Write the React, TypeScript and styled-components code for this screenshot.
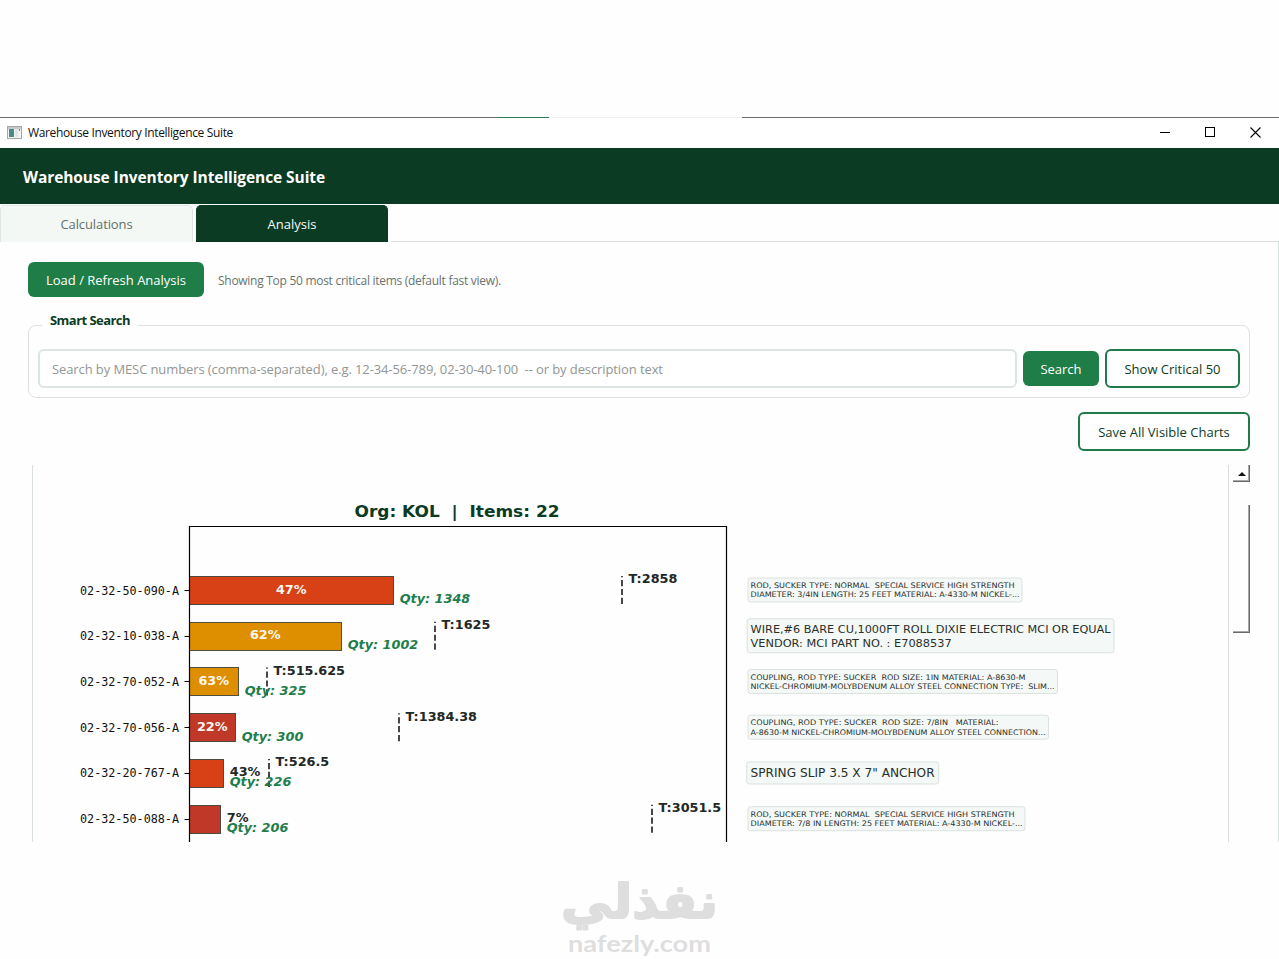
import React from "react";
import styled, { createGlobalStyle } from "styled-components";

const GlobalStyle = createGlobalStyle`
  * { box-sizing: border-box; }
  body { margin: 0; background: #fff; overflow: hidden; font-family: "Open Sans", "Noto Sans", sans-serif; }
`;

const Page = styled.main`
  width: 1279px;
  height: 959px;
  padding-top: 117px;
  background: #fefefe;
  display: flex;
  flex-direction: column;
`;

const TopEdge = styled.div`
  height: 1px;
  flex: none;
  background: linear-gradient(to right, #6a6f6c 0 498px, #2d7b55 498px 549px, #f1f1f1 549px 742px, #6a6f6c 742px);
`;

const AppWindow = styled.section`
  height: 724px;
  display: flex;
  flex-direction: column;
  overflow: hidden;
`;

const TitleBar = styled.div`
  height: 30px;
  flex: none;
  display: flex;
  align-items: center;
  padding: 0 18px 2px 7px;
  gap: 6px;
  background: #fff;
`;

const TitleText = styled.span`
  flex: 1;
  font-size: 12px;
  letter-spacing: -0.35px;
  color: #111;
`;

const WindowButtons = styled.div`
  display: flex;
  gap: 34px;
  svg { display: block; }
`;

const Header = styled.header`
  height: 56px;
  flex: none;
  padding: 2px 23px 0;
  display: flex;
  align-items: center;
  background: #0c3b24;
  color: #fff;
  font-size: 15.5px;
  font-weight: 700;
  letter-spacing: -0.08px;
`;

const Tabs = styled.nav`
  height: 38px;
  flex: none;
  display: flex;
  padding-top: 1px;
  gap: 3px;
`;

const Tab = styled.div<{ $active?: boolean }>`
  width: ${(p) => (p.$active ? 192 : 193)}px;
  height: 37px;
  display: flex;
  align-items: center;
  justify-content: center;
  border-radius: 5px 5px 0 0;
  border: 1px solid ${(p) => (p.$active ? "#0c3b24" : "#dfe8e4")};
  border-bottom: 0;
  background: ${(p) => (p.$active ? "#0c3b24" : "#f3f8f5")};
  color: ${(p) => (p.$active ? "#f4fbf7" : "#64706a")};
  font-size: 13px;
  letter-spacing: ${(p) => (p.$active ? 0 : -0.1)}px;
  font-weight: ${(p) => (p.$active ? 500 : 400)};
`;

const TabRule = styled.div`
  flex: 1;
  border-bottom: 1px solid #d9dedc;
`;

const Pane = styled.div`
  flex: 1;
  min-height: 0;
  padding: 20px 28px 0;
  border-right: 1px solid #d5e5de;
  display: flex;
  flex-direction: column;
`;

const ActionRow = styled.div`
  display: flex;
  align-items: center;
  gap: 14px;
`;

const Button = styled.button<{ $outline?: boolean; $width: number }>`
  width: ${(p) => p.$width}px;
  height: ${(p) => (p.$outline ? 39 : 35)}px;
  flex: none;
  padding: 0;
  border: ${(p) => (p.$outline ? "2px solid #217a49" : "0")};
  border-radius: 6px;
  background: ${(p) => (p.$outline ? "#fff" : "#1f7d48")};
  color: ${(p) => (p.$outline ? "#0c3b24" : "#fff")};
  font: 500 13px "Open Sans", sans-serif;
  white-space: nowrap;
`;

const Status = styled.span`
  padding-top: 1px;
  font-size: 12px;
  letter-spacing: -0.28px;
  color: #6a736e;
`;

const SearchGroup = styled.section`
  margin-top: 28px;
  width: 1222px;
  height: 73px;
  border: 1px solid #dbe2df;
  border-radius: 8px;
  padding: 0 9px;
`;

const GroupTitle = styled.div`
  width: fit-content;
  height: 20px;
  margin: -16px 0 19px 4px;
  padding: 0 8px;
  line-height: 20px;
  font-size: 13px;
  font-weight: 700;
  letter-spacing: -0.55px;
  background: #fefefe;
  color: #0c3b24;
`;

const SearchRow = styled.div`
  display: flex;
  align-items: center;
  gap: 6px;
`;

const SearchInput = styled.input`
  flex: 1;
  min-width: 0;
  height: 39px;
  padding: 0 12px;
  border: 2px solid #dce5e1;
  border-radius: 6px;
  background: #fff;
  font: 400 13px "Open Sans", sans-serif;
  letter-spacing: -0.1px;
  &::placeholder { color: #929694; opacity: 1; }
`;

const SaveRow = styled.div`
  display: flex;
  justify-content: flex-end;
  margin-top: 14px;
  width: 1222px;
`;

const ScrollArea = styled.div`
  margin: 14px 0 0 4px;
  width: 1218px;
  height: 377px;
  display: flex;
  gap: 4px;
`;

const ChartFrame = styled.div`
  width: 1197px;
  border: 1px solid #d9dfdc;
  border-width: 0 1px;
  svg { display: block; }
`;

const ScrollBar = styled.div`
  width: 17px;
  display: flex;
  flex-direction: column;
  gap: 23px;
`;

const ScrollPart = styled.div<{ $height: number }>`
  height: ${(p) => p.$height}px;
  padding: 2px 0 0 1px;
  display: flex;
  align-items: center;
  justify-content: center;
  border-right: 1px solid #696969;
  border-bottom: 1px solid #696969;
  box-shadow: inset -1px -1px 0 #a8a8a8;
`;

const Brand = styled.footer`
  height: 117px;
  display: flex;
  justify-content: center;
  svg { display: block; }
`;

type Item = {
  code: string;
  end: number;
  pct: string;
  outside?: boolean;
  fill: string;
  qty: string;
  target?: [number, string];
  desc: [string, number][];
  size: number;
  box: [number, number, number];
};

const items: Item[] = [
  { code: "02-32-50-090-A", end: 393.5, pct: "47%", fill: "#d84015", qty: "1348", target: [622, "2858"], size: 7.6, box: [747.5, 274, 24],
    desc: [["ROD, SUCKER TYPE: NORMAL  SPECIAL SERVICE HIGH STRENGTH", 264], ["DIAMETER: 3/4IN LENGTH: 25 FEET MATERIAL: A-4330-M NICKEL-...", 269]] },
  { code: "02-32-10-038-A", end: 341.5, pct: "62%", fill: "#de8f00", qty: "1002", target: [435, "1625"], size: 11.1, box: [746.7, 366.8, 34],
    desc: [["WIRE,#6 BARE CU,1000FT ROLL DIXIE ELECTRIC MCI OR EQUAL", 360], ["VENDOR: MCI PART NO. : E7088537", 201]] },
  { code: "02-32-70-052-A", end: 238.5, pct: "63%", fill: "#de8f00", qty: "325", target: [267, "515.625"], size: 7.6, box: [747.5, 309.5, 24],
    desc: [["COUPLING, ROD TYPE: SUCKER  ROD SIZE: 1IN MATERIAL: A-8630-M", 275], ["NICKEL-CHROMIUM-MOLYBDENUM ALLOY STEEL CONNECTION TYPE:  SLIM...", 304]] },
  { code: "02-32-70-056-A", end: 235.5, pct: "22%", fill: "#c03828", qty: "300", target: [399, "1384.38"], size: 7.6, box: [747.5, 300.5, 24],
    desc: [["COUPLING, ROD TYPE: SUCKER  ROD SIZE: 7/8IN   MATERIAL:", 248], ["A-8630-M NICKEL-CHROMIUM-MOLYBDENUM ALLOY STEEL CONNECTION...", 295]] },
  { code: "02-32-20-767-A", end: 223.5, pct: "43%", outside: true, fill: "#d84015", qty: "226", target: [269, "526.5"], size: 11.8, box: [746.2, 192, 22],
    desc: [['SPRING SLIP 3.5 X 7" ANCHOR', 184]] },
  { code: "02-32-50-088-A", end: 220.5, pct: "7%", outside: true, fill: "#c03828", qty: "206", target: [652, "3051.5"], size: 7.6, box: [747.5, 277, 24],
    desc: [["ROD, SUCKER TYPE: NORMAL  SPECIAL SERVICE HIGH STRENGTH", 264], ["DIAMETER: 7/8 IN LENGTH: 25 FEET MATERIAL: A-4330-M NICKEL-...", 272]] },
];

const ChartText = styled.text`
  font-family: "DejaVu Sans", sans-serif;
  font-size: 12.5px;
  white-space: pre;
`;
const ChartTitle = styled(ChartText)`
  font-size: 16.6px;
  font-weight: 700;
  fill: #0c3b24;
`;
const CodeLabel = styled(ChartText)`
  font-family: "DejaVu Sans Mono", monospace;
  fill: #111;
`;
const ValueLabel = styled(ChartText)<{ $light?: boolean }>`
  font-size: 12.8px;
  font-weight: 700;
  fill: ${(p) => (p.$light ? "#fdf6ee" : "#222826")};
`;
const QtyLabel = styled(ChartText)`
  font-size: 12.8px;
  font-weight: 700;
  font-style: italic;
  fill: #217d4c;
`;
const Description = styled(ChartText)<{ $size: number }>`
  font-size: ${(p) => p.$size}px;
  fill: #28302c;
`;

const AXIS = 189.5;

function ChartRow({ item, index }: { item: Item; index: number }) {
  const y = 590.3 + index * 45.74;
  const top = Math.round(y - 14.4) + 0.5;
  const pitch = item.size < 9 ? 9.3 : 14;
  const first = item.desc.length === 1 ? y + 4.2 : y + item.size * 0.36 - pitch / 2 - 0.3;
  const [bx, bw, bh] = item.box;
  return (
    <g>
      <CodeLabel x={80} y={y + 4.2} textLength={99} lengthAdjust="spacingAndGlyphs">{item.code}</CodeLabel>
      <line x1={184.5} x2={AXIS} y1={Math.floor(y) + 0.5} y2={Math.floor(y) + 0.5} stroke="#000" />
      <rect x={AXIS} y={top} width={item.end - AXIS} height={28} fill={item.fill} stroke="#3e4037" strokeWidth={0.9} />
      {item.target && (
        <>
          <line x1={item.target[0]} x2={item.target[0]} y1={y + 13.7} y2={y - 14.3} stroke="#333" strokeWidth={1.8} strokeDasharray="6.2 2.7" />
          <ValueLabel x={item.target[0] + 6.6} y={y - 6.9}>{"T:" + item.target[1]}</ValueLabel>
        </>
      )}
      <ValueLabel
        $light={!item.outside}
        x={item.outside ? item.end + 6.3 : (AXIS + item.end) / 2 - 0.3}
        y={y + 3.2}
        textAnchor={item.outside ? "start" : "middle"}
      >
        {item.pct}
      </ValueLabel>
      <QtyLabel x={item.end + 6.2} y={y + 13}>{"Qty: " + item.qty}</QtyLabel>
      <rect x={bx + 0.5} y={y - bh / 2 - 0.3} width={bw} height={bh} rx={2.5} fill="#f4f8f6" stroke="#dbe2de" />
      {item.desc.map(([line, width], i) => (
        <Description key={line} $size={item.size} x={750.6} y={first + i * pitch} textLength={width} lengthAdjust="spacingAndGlyphs">
          {line}
        </Description>
      ))}
    </g>
  );
}

function InventoryChart() {
  return (
    <svg width="1195" height="377" viewBox="33 465 1195 377">
      <ChartTitle x={354.5} y={517} textLength={205} lengthAdjust="spacingAndGlyphs">{"Org: KOL  |  Items: 22"}</ChartTitle>
      {items.map((item, i) => <ChartRow key={item.code} item={item} index={i} />)}
      <path d="M189.5 850V526.5H726.5V850" fill="none" stroke="#000" strokeWidth="1.2" />
    </svg>
  );
}

export default function App() {
  return (
    <>
      <GlobalStyle />
      <Page>
        <TopEdge />
        <AppWindow>
          <TitleBar>
            <svg width="15" height="13" viewBox="0 0 15 13">
              <rect x=".5" y=".5" width="14" height="12" fill="#f1f3f2" stroke="#a4aaa8" />
              <rect x="1" y="1" width="13" height="2" fill="#c5cac8" />
              <rect x="2" y="3" width="5" height="8" fill="#4b8b83" />
              <rect x="8" y="3" width="3" height="8" fill="#dfe5e2" />
              <rect x="12" y="3" width="1" height="2" fill="#7a807d" />
            </svg>
            <TitleText>Warehouse Inventory Intelligence Suite</TitleText>
            <WindowButtons>
              <svg width="11" height="11"><path d="M0 5.5H10" stroke="#000" /></svg>
              <svg width="11" height="11"><rect x=".5" y=".5" width="9" height="9" fill="none" stroke="#000" /></svg>
              <svg width="11" height="11"><path d="M.5 .5L10.5 10.5M10.5 .5L.5 10.5" stroke="#000" strokeWidth="1.1" /></svg>
            </WindowButtons>
          </TitleBar>
          <Header>Warehouse Inventory Intelligence Suite</Header>
          <Tabs>
            <Tab>Calculations</Tab>
            <Tab $active>Analysis</Tab>
            <TabRule />
          </Tabs>
          <Pane>
            <ActionRow>
              <Button $width={176}>Load / Refresh Analysis</Button>
              <Status>Showing Top 50 most critical items (default fast view).</Status>
            </ActionRow>
            <SearchGroup>
              <GroupTitle>Smart Search</GroupTitle>
              <SearchRow>
                <SearchInput placeholder="Search by MESC numbers (comma-separated), e.g. 12-34-56-789, 02-30-40-100  -- or by description text" />
                <Button $width={76}>Search</Button>
                <Button $outline $width={135}>Show Critical 50</Button>
              </SearchRow>
            </SearchGroup>
            <SaveRow>
              <Button $outline $width={172}>Save All Visible Charts</Button>
            </SaveRow>
            <ScrollArea>
              <ChartFrame><InventoryChart /></ChartFrame>
              <ScrollBar>
                <ScrollPart $height={17}>
                  <svg width="8" height="4"><path d="M0 4L4 0L8 4Z" fill="#111" /></svg>
                </ScrollPart>
                <ScrollPart $height={128} />
              </ScrollBar>
            </ScrollArea>
          </Pane>
        </AppWindow>
        <Brand>
          <svg width="170" height="117" viewBox="555 842 170 117" fill="#dedede">
            <text x="639.5" y="918" textAnchor="middle" direction="rtl" fontFamily="DejaVu Sans" fontWeight="700" fontSize="48" textLength="157" lengthAdjust="spacingAndGlyphs" stroke="#dedede" strokeWidth="2" strokeLinejoin="round">نفذلي</text>
            <text x="568" y="952" fontFamily="Lato" fontWeight="700" fontSize="23" textLength="143" lengthAdjust="spacingAndGlyphs">nafezly.com</text>
          </svg>
        </Brand>
      </Page>
    </>
  );
}
